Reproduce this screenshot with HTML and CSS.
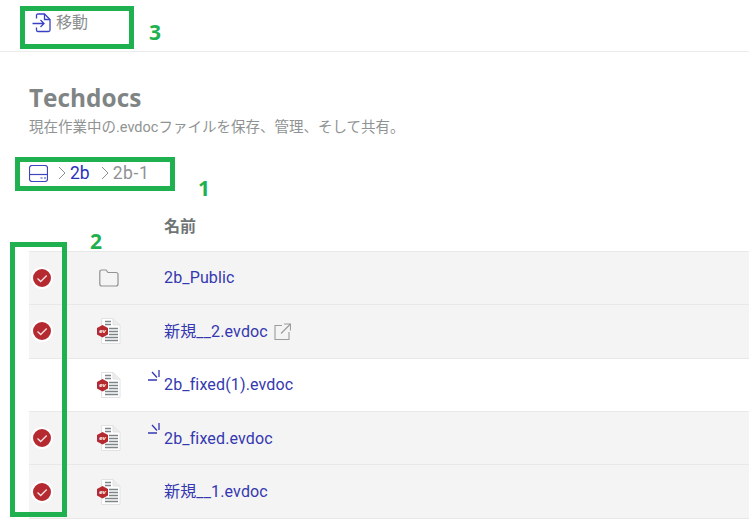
FILE: index.html
```html
<!DOCTYPE html>
<html lang="ja">
<head>
    <meta charset="UTF-8">
    <meta name="viewport" content="width=device-width, initial-scale=1.0">
    <title>Techdocs</title>
    <link rel="stylesheet" href="styles.css">
</head>
<body>
    <svg class="sprites" width="0" height="0">
        <symbol id="evdoc" viewBox="0 0 26 26">
            <path d="M5.500 .5H17L24 7V25.500H5.500Z" fill="#fff" stroke="#e2e2e2"/>
            <path d="M17 .5V7H24" fill="#ececec" stroke="#e2e2e2"/>
            <path d="M9 3.500h6M9 6.500h6" stroke="#7d8588" stroke-width="1.600"/>
            <path d="M13 10.500h9M13 13.500h9M13 16.500h9M9 19.500h13M9 22.500h13" stroke="#7d8588" stroke-width="1.600"/>
            <path d="M6.500 7 12 10v6.500L6.500 19.500 1 16.500V10Z" fill="#b52a30"/>
            <text x="6.500" y="15.200" class="ev-text">ev</text>
        </symbol>
        <symbol id="spin" viewBox="0 0 14 14">
            <path d="M11 1v7M4 3l5 5.500M0 11h9" fill="none" stroke="#3438b0" stroke-width="1.300"/>
        </symbol>
        <symbol id="check" viewBox="0 0 22 22">
            <circle cx="11" cy="11" r="10" fill="#b52a30" stroke="#fff" stroke-width="2"/>
            <path d="M6.500 11.500l3.200 3 6-6" fill="none" stroke="#f3e3e3" stroke-width="1.300"/>
        </symbol>
    </svg>

    <header class="toolbar">
        <a class="move-btn">
            <svg class="icon-move" viewBox="0 0 20 20" width="20" height="20">
                <path d="M4.500 5.500V2.500q0-1.500 1.500-1.500H12.500L18 6.500V17q0 1.500-1.500 1.500H6q-1.500 0-1.500-1.500V14.500" fill="none" stroke="#3a40c4" stroke-width="1.300"/>
                <path d="M12.500 1V6.500H18" fill="none" stroke="#3a40c4" stroke-width="1.300"/>
                <path d="M.5 10.500H12M8.500 7l3.500 3.500L8.500 14" fill="none" stroke="#3a40c4" stroke-width="1.300"/>
            </svg>
            <span>移動</span>
        </a>
    </header>

    <main class="content">
        <h1>Techdocs</h1>
        <p class="subtitle">現在作業中の.evdocファイルを保存、管理、そして共有。</p>

        <nav class="crumbs">
            <svg viewBox="0 0 19 17" width="19" height="17">
                <rect x=".5" y=".5" width="18" height="16" rx="2.500" fill="none" stroke="#3f45c0" stroke-width="1.200"/>
                <path d="M.5 9.500H18.500" stroke="#3f45c0" stroke-width="1.200"/>
                <path d="M11.500 13h2M15 13h2" stroke="#3f45c0" stroke-width="1.200"/>
            </svg>
            <svg class="sep" viewBox="0 0 8 14" width="8" height="14"><path d="M1 1l6 6-6 6" fill="none" stroke="#8a8f8f"/></svg>
            <a class="crumb-link">2b</a>
            <svg class="sep" viewBox="0 0 8 14" width="8" height="14"><path d="M1 1l6 6-6 6" fill="none" stroke="#8a8f8f"/></svg>
            <span class="crumb-current">2b-1</span>
        </nav>

        <div class="list-head">名前</div>

        <div class="file-row selected">
            <div class="col-check"><svg width="22" height="22"><use href="#check"/></svg></div>
            <div class="col-icon">
                <svg viewBox="0 0 20 18" width="20" height="18"><path d="M.8 3q0-2 2-2H7l2 2.500H17q2 0 2 2V15q0 2-2 2H2.800q-2 0-2-2Z" fill="none" stroke="#8f9393" stroke-width="1.200"/></svg>
            </div>
            <a class="file-name">2b_Public</a>
        </div>

        <div class="file-row selected">
            <div class="col-check"><svg width="22" height="22"><use href="#check"/></svg></div>
            <div class="col-icon"><svg class="doc" width="26" height="26"><use href="#evdoc"/></svg></div>
            <a class="file-name">新規__2.evdoc</a>
            <svg class="ext" viewBox="0 0 17 17" width="17" height="17">
                <path d="M8 2.500H1v14h14V9M7 10.500 16 1.500M10 1h6.500v6.500" fill="none" stroke="#9a9d9d" stroke-width="1.100"/>
            </svg>
        </div>

        <div class="file-row">
            <div class="col-check"></div>
            <div class="col-icon"><svg class="doc" width="26" height="26"><use href="#evdoc"/></svg></div>
            <svg class="spin" width="14" height="14"><use href="#spin"/></svg>
            <a class="file-name">2b_fixed(1).evdoc</a>
        </div>

        <div class="file-row selected">
            <div class="col-check"><svg width="22" height="22"><use href="#check"/></svg></div>
            <div class="col-icon"><svg class="doc" width="26" height="26"><use href="#evdoc"/></svg></div>
            <svg class="spin" width="14" height="14"><use href="#spin"/></svg>
            <a class="file-name">2b_fixed.evdoc</a>
        </div>

        <div class="file-row selected">
            <div class="col-check"><svg width="22" height="22"><use href="#check"/></svg></div>
            <div class="col-icon"><svg class="doc" width="26" height="26"><use href="#evdoc"/></svg></div>
            <a class="file-name">新規__1.evdoc</a>
        </div>
    </main>

    <!-- annotations on top of the screenshot -->
    <div class="mark mark-toolbar"></div>
    <div class="mark-num num-toolbar">3</div>
    <div class="mark mark-crumbs"></div>
    <div class="mark-num num-crumbs">1</div>
    <div class="mark mark-checks"></div>
    <div class="mark-num num-checks">2</div>
</body>
</html>
```

FILE: styles.css
```css
html, body { margin: 0; padding: 0; }
body {
    font-family: Roboto, "Noto Sans CJK JP", sans-serif;
    background: #fff;
    height: 524px;
    overflow: hidden;
    position: relative;
}
.sprites { display: none; }
.ev-text { font: italic bold 6px "Liberation Sans", sans-serif; fill: #fff; text-anchor: middle; }

.toolbar {
    height: 51px;
    border-bottom: 1px solid #ececec;
    padding-left: 32px;
    display: flex;
    align-items: flex-start;
}
.move-btn { display: flex; align-items: center; gap: 4px; margin-top: 13px; color: #8a8e8e; font-size: 16px; line-height: 20px; }

.content { padding-left: 29px; }
h1 { margin: 31px 0 0; font: bold 24.400px/30px "Open Sans", sans-serif; color: #7f8585; }
.subtitle { margin: 5px 0 0; font-size: 14.500px; line-height: 20px; color: #8f9393; }

.crumbs { display: flex; align-items: center; height: 20px; margin-top: 25px; font-size: 17.500px; }
.crumbs .sep { margin: 0 4px 0 10px; }
.crumb-link { color: #2c30bc; }
.crumbs .crumb-link + .sep { margin-left: 11px; }
.crumb-current { color: #8f9393; letter-spacing: .6px; }

.list-head {
    height: 67.800px;
    box-sizing: border-box;
    padding: 34px 0 0 135px;
    font-size: 16px;
    line-height: 20px;
    font-weight: bold;
    color: #6f7474;
}

.file-row {
    display: flex;
    align-items: center;
    height: 53.400px;
    box-sizing: border-box;
    border-top: 1px solid #e8e8e8;
    background: #fff;
    position: relative;
}
.file-row:last-child { height: 54.400px; border-bottom: 1px solid #e8e8e8; }
.file-row.selected { background: #f4f4f4; }

.col-check { width: 26px; display: flex; justify-content: center; flex: none; margin-right: 40px; }
.col-check svg { display: block; }
.col-icon { width: 28px; display: flex; justify-content: center; flex: none; margin-right: 41px; }
.file-name { color: #3438b0; font-size: 16px; line-height: 20px; letter-spacing: .15px; padding-top: 1px; }
.ext { margin-left: 6px; }
.spin { position: absolute; left: 119px; top: 10px; }

.mark { position: absolute; border: 5px solid #1fb14f; box-sizing: border-box; }
.mark-toolbar { left: 20px; top: 6px; width: 114px; height: 43px; }
.mark-crumbs { left: 15px; top: 157px; width: 160px; height: 34px; }
.mark-checks { left: 10px; top: 242px; width: 57px; height: 275px; }
.mark-num { position: absolute; font: bold 21px/24px "Open Sans", sans-serif; color: #1fb14f; }
.num-toolbar { left: 149px; top: 20px; }
.num-crumbs { left: 198px; top: 176px; }
.num-checks { left: 90px; top: 229px; }
```
